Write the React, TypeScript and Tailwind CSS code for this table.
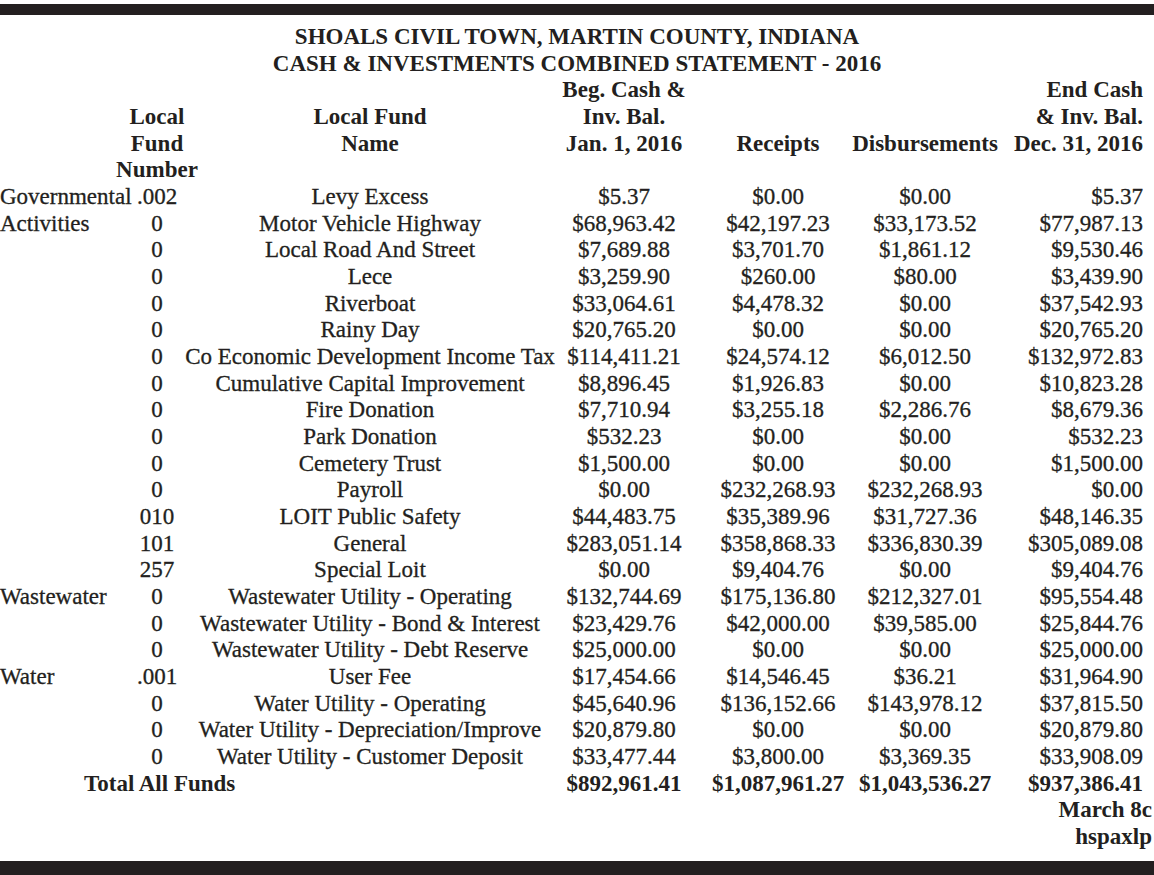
import React from "react";

type Row = { cat?: string; num: string; name: string; beg: string; rec: string; dis: string; end: string };

const rows: Row[] = [
  { cat: "Governmental", num: ".002", name: "Levy Excess", beg: "$5.37", rec: "$0.00", dis: "$0.00", end: "$5.37" },
  { cat: "Activities", num: "0", name: "Motor Vehicle Highway", beg: "$68,963.42", rec: "$42,197.23", dis: "$33,173.52", end: "$77,987.13" },
  { num: "0", name: "Local Road And Street", beg: "$7,689.88", rec: "$3,701.70", dis: "$1,861.12", end: "$9,530.46" },
  { num: "0", name: "Lece", beg: "$3,259.90", rec: "$260.00", dis: "$80.00", end: "$3,439.90" },
  { num: "0", name: "Riverboat", beg: "$33,064.61", rec: "$4,478.32", dis: "$0.00", end: "$37,542.93" },
  { num: "0", name: "Rainy Day", beg: "$20,765.20", rec: "$0.00", dis: "$0.00", end: "$20,765.20" },
  { num: "0", name: "Co Economic Development Income Tax", beg: "$114,411.21", rec: "$24,574.12", dis: "$6,012.50", end: "$132,972.83" },
  { num: "0", name: "Cumulative Capital Improvement", beg: "$8,896.45", rec: "$1,926.83", dis: "$0.00", end: "$10,823.28" },
  { num: "0", name: "Fire Donation", beg: "$7,710.94", rec: "$3,255.18", dis: "$2,286.76", end: "$8,679.36" },
  { num: "0", name: "Park Donation", beg: "$532.23", rec: "$0.00", dis: "$0.00", end: "$532.23" },
  { num: "0", name: "Cemetery Trust", beg: "$1,500.00", rec: "$0.00", dis: "$0.00", end: "$1,500.00" },
  { num: "0", name: "Payroll", beg: "$0.00", rec: "$232,268.93", dis: "$232,268.93", end: "$0.00" },
  { num: "010", name: "LOIT Public Safety", beg: "$44,483.75", rec: "$35,389.96", dis: "$31,727.36", end: "$48,146.35" },
  { num: "101", name: "General", beg: "$283,051.14", rec: "$358,868.33", dis: "$336,830.39", end: "$305,089.08" },
  { num: "257", name: "Special Loit", beg: "$0.00", rec: "$9,404.76", dis: "$0.00", end: "$9,404.76" },
  { cat: "Wastewater", num: "0", name: "Wastewater Utility - Operating", beg: "$132,744.69", rec: "$175,136.80", dis: "$212,327.01", end: "$95,554.48" },
  { num: "0", name: "Wastewater Utility - Bond & Interest", beg: "$23,429.76", rec: "$42,000.00", dis: "$39,585.00", end: "$25,844.76" },
  { num: "0", name: "Wastewater Utility - Debt Reserve", beg: "$25,000.00", rec: "$0.00", dis: "$0.00", end: "$25,000.00" },
  { cat: "Water", num: ".001", name: "User Fee", beg: "$17,454.66", rec: "$14,546.45", dis: "$36.21", end: "$31,964.90" },
  { num: "0", name: "Water Utility - Operating", beg: "$45,640.96", rec: "$136,152.66", dis: "$143,978.12", end: "$37,815.50" },
  { num: "0", name: "Water Utility - Depreciation/Improve", beg: "$20,879.80", rec: "$0.00", dis: "$0.00", end: "$20,879.80" },
  { num: "0", name: "Water Utility - Customer Deposit", beg: "$33,477.44", rec: "$3,800.00", dis: "$3,369.35", end: "$33,908.09" },
];

const grid = "grid grid-cols-[136px_42px_384px_124px_184px_110px_174px] whitespace-nowrap";
const c = "flex justify-center";
const r = "flex justify-end pr-[11px]";
const reg = "[-webkit-text-stroke:0.3px_#231f20]";

export default function App() {
  return (
    <div
      className="w-[1154px] h-[875px] bg-white text-[#231f20] overflow-hidden flex flex-col"
      style={{ fontFamily: '"Liberation Serif", "Times New Roman", serif' }}
    >
      <div className="mt-[4px] h-[11px] bg-[#231f20]" />
      <div className="mt-[9px] text-[23px] leading-[26.67px]">
        <div className="font-bold text-center">
          <div>SHOALS CIVIL TOWN, MARTIN COUNTY, INDIANA</div>
          <div>CASH &amp; INVESTMENTS COMBINED STATEMENT - 2016</div>
        </div>
        <div className={grid + " font-bold"}>
          <div />
          <div />
          <div />
          <div className={c}>Beg. Cash &amp;</div>
          <div />
          <div />
          <div className={r}>End Cash</div>

          <div />
          <div className={c}>Local</div>
          <div className={c}>Local Fund</div>
          <div className={c}>Inv. Bal.</div>
          <div />
          <div />
          <div className={r}>&amp; Inv. Bal.</div>

          <div />
          <div className={c}>Fund</div>
          <div className={c}>Name</div>
          <div className={c}>Jan. 1, 2016</div>
          <div className={c}>Receipts</div>
          <div className={c}>Disbursements</div>
          <div className={r}>Dec. 31, 2016</div>

          <div />
          <div className={c}>Number</div>
          <div />
          <div />
          <div />
          <div />
          <div />
        </div>
        <div className={grid + " " + reg}>
          {rows.map((row, i) => (
            <React.Fragment key={i}>
              <div>{row.cat ?? ""}</div>
              <div className={c}>{row.num}</div>
              <div className={c}>{row.name}</div>
              <div className={c}>{row.beg}</div>
              <div className={c}>{row.rec}</div>
              <div className={c}>{row.dis}</div>
              <div className={r}>{row.end}</div>
            </React.Fragment>
          ))}
        </div>
        <div className={grid + " font-bold"}>
          <div className="col-span-3 pl-[84px]">Total All Funds</div>
          <div className={c}>$892,961.41</div>
          <div className={c}>$1,087,961.27</div>
          <div className={c}>$1,043,536.27</div>
          <div className={r}>$937,386.41</div>
        </div>
        <div className="flex flex-col items-end pr-[2px] font-bold">
          <div>March 8c</div>
          <div>hspaxlp</div>
        </div>
      </div>
      <div className="mt-auto h-[14px] bg-[#231f20]" />
    </div>
  );
}
